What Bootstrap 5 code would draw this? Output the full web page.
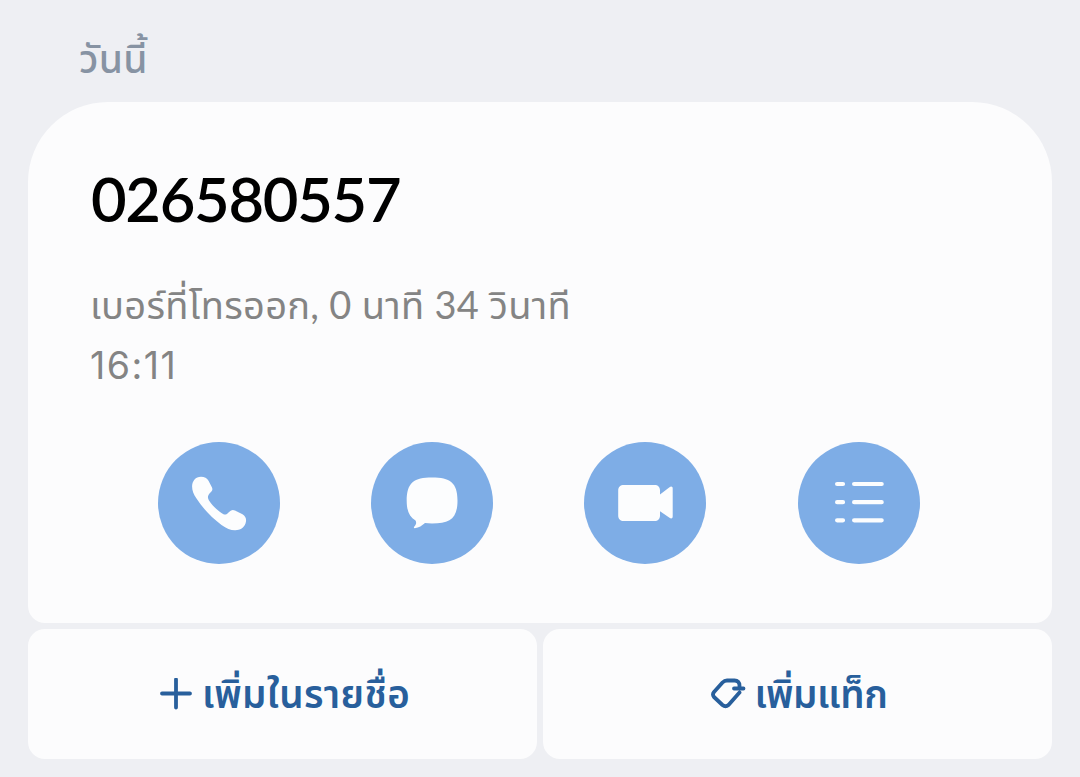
<!DOCTYPE html>
<html lang="th">
<head>
<meta charset="utf-8">
<meta name="viewport" content="width=device-width, initial-scale=1">
<title>026580557</title>
<link href="https://cdn.jsdelivr.net/npm/bootstrap@5.3.0/dist/css/bootstrap.min.css" rel="stylesheet">
<style>
body { background: #eeeff3; font-family: Lato, "Noto Sans Thai", "Noto Sans", sans-serif; height: 777px; overflow: hidden; }
.call-page { padding: 0 28px; }
.day-label { height: 102px; padding: 28px 0 0 51px; font-size: 39px; line-height: 60px; font-weight: 500; color: #8793a3; letter-spacing: .3px; }
.panel { background: #fcfcfd; border: 0; }
.call-card { height: 521px; border-radius: 80px 80px 17px 17px; padding: 60px 63px 0; }
.number { font-size: 61.500px; line-height: 72px; font-weight: 600; color: #000; letter-spacing: -1.300px; }
.detail { margin-top: 40px; margin-left: -1px; font-size: 38px; line-height: 60px; color: #848484; white-space: nowrap; letter-spacing: .3px; }
.clock { font-family: Inter, sans-serif; font-size: 37.500px; height: 60px; line-height: 63px; letter-spacing: 1.500px; }
.actions { margin-top: 48px; padding: 0 69px 0 67px; column-gap: 91.200px; }
.action { width: 122px; height: 122px; background: #7eade6; color: #fcfdfe; }
.action svg { flex: none; }
.extras { margin-top: 6px; gap: 6px; }
.extra { height: 130px; border-radius: 17px; color: #285f9c; font-size: 38.500px; font-weight: 600; line-height: 60px; white-space: nowrap; }
.extra svg { flex: none; }
.extra span { padding-bottom: 3px; }
.add-contact { padding-left: 5px; }
.add-tag { padding-left: 4px; }
.add-text { margin-left: 10px; letter-spacing: .35px; }
.tag-text { margin-left: 8px; letter-spacing: -.4px; }
</style>
</head>
<body>
<main class="call-page">
  <div class="day-label"><span>วันนี้</span></div>
  <section class="panel card call-card">
    <h1 class="number mb-0"><span>026580557</span></h1>
    <div class="detail"><div><span>เบอร์ที่โทรออก, 0 นาที 34 วินาที</span></div><div class="clock"><span>16:11</span></div></div>
    <div class="actions d-flex">
      <button class="action btn p-0 border-0 rounded-circle" aria-label="โทร"><svg class="d-block" width="122" height="122" viewBox="0 0 122 122" fill="currentColor"><path d="M43 34.700C46.500 34.700 49 36 50.500 38.800L54 45.500C55 48 54 49 51.500 51.500C49.500 54 49.500 56 51 58.500C54.500 64 60.500 69.500 65.500 72.300C67.500 73 68.500 72.300 70 71C73 68 74.500 67.300 77 68.500L84.500 72.300C88 74.500 88.800 77.500 87.500 81.500C86 85.800 82 88.300 77 88.200C72.500 88.200 68.500 86.500 63.500 83C53.500 75.500 44.500 66 38.500 56.500C35.500 52 34 48 34.100 44C34.300 39 37.500 34.700 43 34.700Z"/></svg></button>
      <button class="action btn p-0 border-0 rounded-circle" aria-label="ข้อความ"><svg class="d-block" width="122" height="122" viewBox="0 0 122 122" fill="currentColor"><path d="M61 35.500C79 35.500 86.500 40.500 86.500 58.500C86.500 76.500 79 81.500 61 81.500C58.500 81.500 56 81.400 54 81.100C51 83.500 48 86 43.800 86.300C42.700 86.300 42.600 85.300 43.400 84.400C45.300 82.300 45.600 80.300 44.500 78.500C38.500 75 35.700 69 35.700 59C35.700 40.500 43 35.500 61 35.500Z"/></svg></button>
      <button class="action btn p-0 border-0 rounded-circle" aria-label="วิดีโอคอล"><svg class="d-block" width="122" height="122" viewBox="0 0 122 122" fill="currentColor"><path d="M40 43H70.500C74 43 76 45 76 48.500V52.500L85.500 45.200C87.300 44 88.700 44.600 88.700 46.500V74.500C88.700 76.500 87.200 77 85.500 75.800L76 69.300V73.500C76 77 74 79 70.500 79H40C36.200 79 34.200 77 34.200 73.500V48.500C34.200 45 36.200 43 40 43Z"/></svg></button>
      <button class="action btn p-0 border-0 rounded-circle" aria-label="รายละเอียด"><svg class="d-block" width="122" height="122" viewBox="0 0 122 122" fill="none" stroke="currentColor" stroke-width="4.200" stroke-linecap="round"><path d="M39.100 42H45M56.100 42H83.700M39.100 60.200H45M56.100 60.200H83.700M39.100 78.300H45M56.100 78.300H83.700"/></svg></button>
    </div>
  </section>
  <div class="extras d-flex">
    <div class="panel extra add-contact d-flex align-items-center justify-content-center flex-fill w-50">
      <svg width="32" height="32" viewBox="0 0 32 32" fill="none" stroke="currentColor" stroke-width="3.800" stroke-linecap="round"><path d="M2 15.500H30M16 1.500V29.500"/></svg>
      <span class="add-text">เพิ่มในรายชื่อ</span>
    </div>
    <div class="panel extra add-tag d-flex align-items-center justify-content-center flex-fill w-50">
      <svg width="35" height="32" viewBox="0 0 35 32" fill="none" stroke="currentColor" stroke-width="3.800" stroke-linecap="round" stroke-linejoin="round"><path d="M32.500 10.500H23M28.500 10.500V7.500Q28.500 2.500 23.500 2.500H16Q13.500 2.500 11.500 4.500L3 14Q1 16.500 3 19L11.500 27Q14.500 29.500 17.500 27L28.500 14.500"/></svg>
      <span class="tag-text">เพิ่มแท็ก</span>
    </div>
  </div>
</main>
<script src="https://cdn.jsdelivr.net/npm/bootstrap@5.3.0/dist/js/bootstrap.bundle.min.js"></script>
</body>
</html>
